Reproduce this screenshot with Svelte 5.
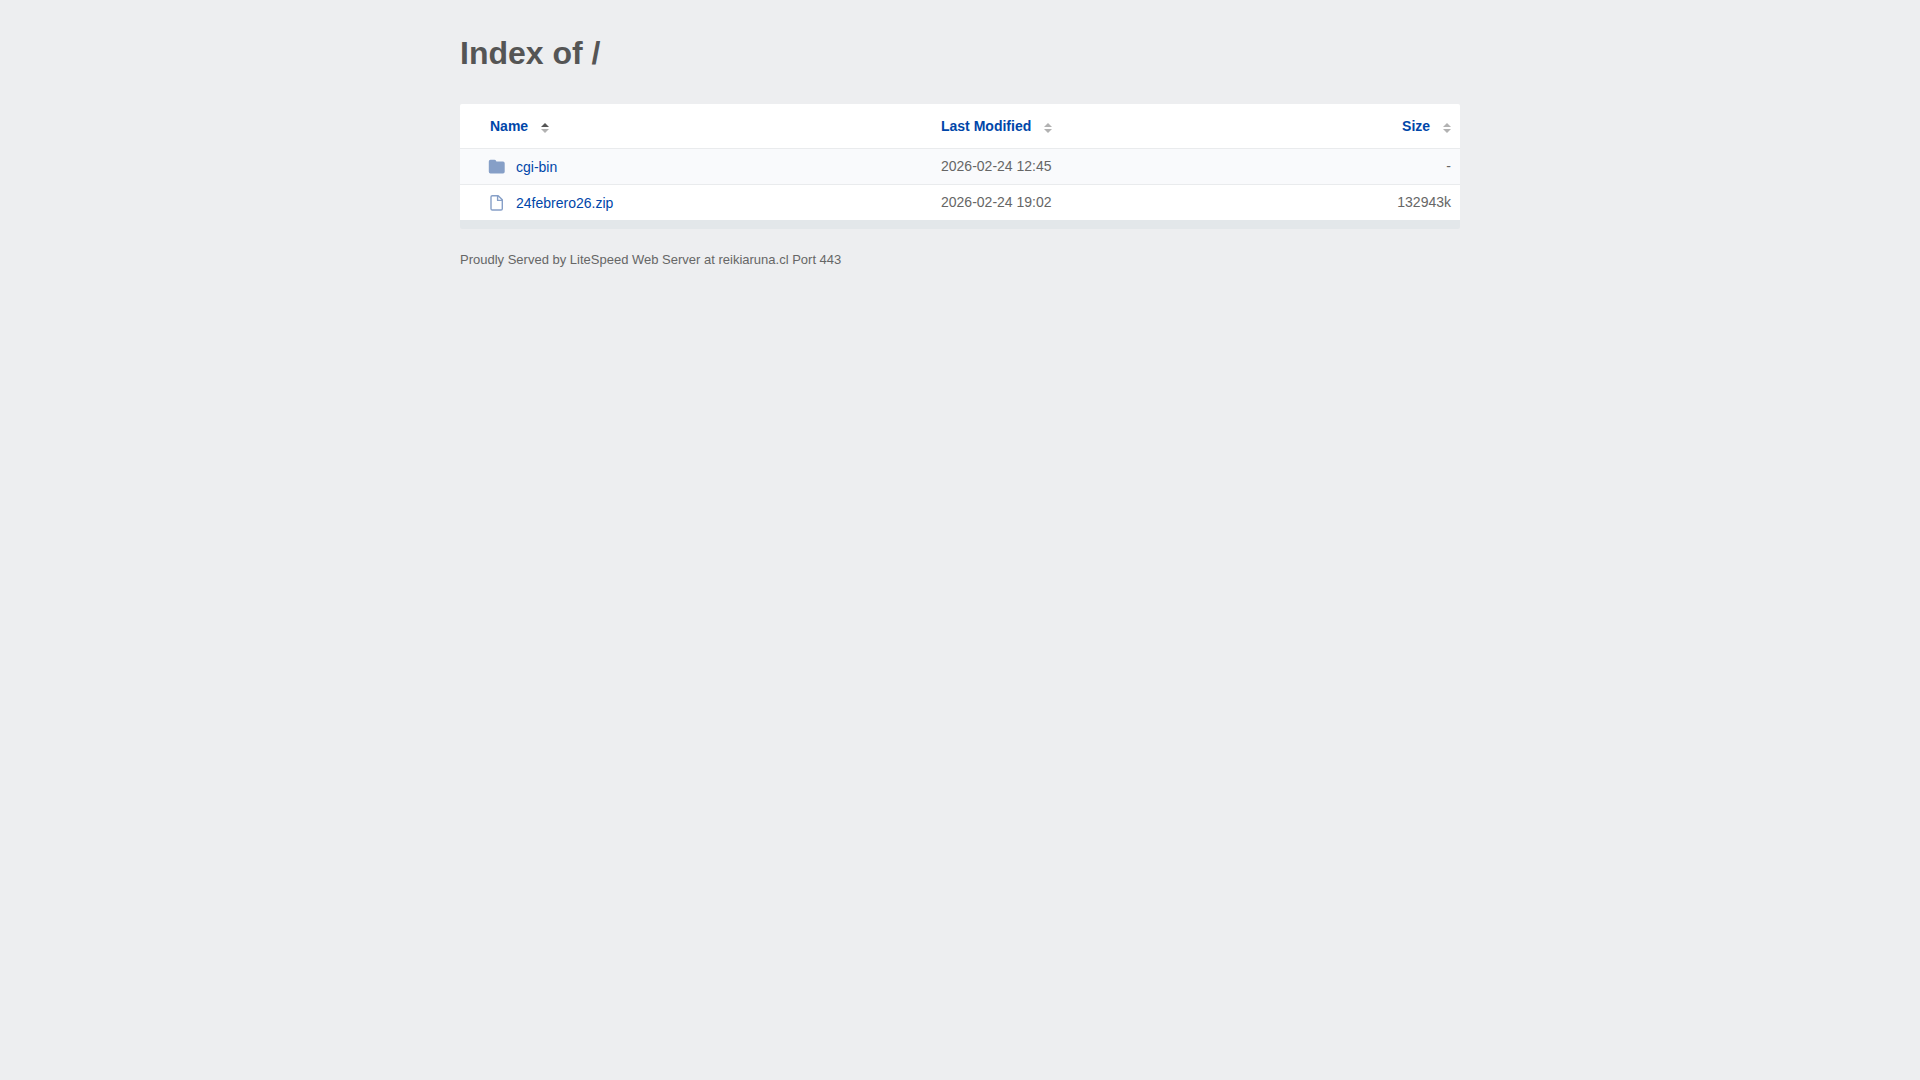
<script lang="ts">
	type Entry = {
		name: string;
		href: string;
		kind: 'folder' | 'file';
		modified: string;
		size: string;
		bytes: number;
	};

	type Key = 'name' | 'modified' | 'size';

	const host = 'reikiaruna.cl';
	const port = 443;

	const entries: Entry[] = [
		{ name: 'cgi-bin', href: '/cgi-bin/', kind: 'folder', modified: '2026-02-24 12:45', size: '-', bytes: -1 },
		{ name: '24febrero26.zip', href: '/24febrero26.zip', kind: 'file', modified: '2026-02-24 19:02', size: '132943k', bytes: 132943 }
	];

	const columns: { key: Key; label: string }[] = [
		{ key: 'name', label: 'Name' },
		{ key: 'modified', label: 'Last Modified' },
		{ key: 'size', label: 'Size' }
	];

	let sortKey = $state<Key>('name');
	let ascending = $state(true);

	function compare(a: Entry, b: Entry) {
		// folders stay on top
		if (a.kind !== b.kind) return a.kind === 'folder' ? -1 : 1;
		const diff = sortKey === 'size' ? a.bytes - b.bytes : a[sortKey].localeCompare(b[sortKey]);
		return ascending ? diff : -diff;
	}

	let rows = $derived([...entries].sort(compare));

	function sortBy(event: MouseEvent, key: Key) {
		event.preventDefault();
		ascending = sortKey === key ? !ascending : true;
		sortKey = key;
	}
</script>

<svelte:head>
	<title>Index of /</title>
</svelte:head>

<main>
	<h1>Index of /</h1>

	<table>
		<thead>
			<tr>
				{#each columns as col}
					<th class={col.key}>
						<a href="#{col.key}" onclick={(e) => sortBy(e, col.key)}>{col.label}</a>
						<svg class="sort" viewBox="0 0 8 10" aria-hidden="true">
							<path class:active={sortKey === col.key && ascending} d="M4 0 8 4H0z" />
							<path class:active={sortKey === col.key && !ascending} d="M0 6h8L4 10z" />
						</svg>
					</th>
				{/each}
			</tr>
		</thead>
		<tbody>
			{#each rows as row}
				<tr>
					<td class="name">
						<a class="entry" href={row.href}>
							{#if row.kind === 'folder'}
								<svg class="icon" viewBox="0 0 18 18" aria-hidden="true">
									<path
										fill="currentColor"
										d="M2.500 1.700h4q1 0 1.400.8l.5 1H15q1.700 0 1.700 1.700v8.600q0 1.700-1.700 1.700H2.500q-1.700 0-1.700-1.700V3.400q0-1.700 1.700-1.700z"
									/>
								</svg>
							{:else}
								<svg class="icon" viewBox="0 0 18 18" aria-hidden="true">
									<path
										fill="none"
										stroke="currentColor"
										stroke-width="1.400"
										stroke-linejoin="round"
										d="M4.300 1.700h5.900L14.300 5.800v8.900q0 1.300-1.300 1.300H4.300Q3 16 3 14.700V3q0-1.300 1.300-1.300zM9.600 2v4.400H14"
									/>
								</svg>
							{/if}
							{row.name}
						</a>
					</td>
					<td class="modified">{row.modified}</td>
					<td class="size">{row.size}</td>
				</tr>
			{/each}
		</tbody>
	</table>

	<footer>Proudly Served by LiteSpeed Web Server at {host} Port {port}</footer>
</main>

<style>
	:global(body) {
		background: #edeef0;
	}

	main {
		max-width: 1000px;
		margin: 0 auto;
		padding: 32px 16px;
		color: #666;
		font-family: Arial, 'Liberation Sans', sans-serif;
		font-size: 14px;
		line-height: 20px;
	}

	h1 {
		margin: 0 0 30px;
		color: #555;
		font-size: 32px;
		line-height: 42px;
	}

	table {
		width: 100%;
		border-collapse: separate;
		border-spacing: 0;
		table-layout: fixed;
		background: #fff;
		border-bottom: 9px solid #e3e7ea;
		border-radius: 2px;
	}

	th {
		height: 44px;
		padding: 0 9px;
		text-align: left;
		white-space: nowrap;
	}

	td {
		height: 33px;
		padding: 0 9px 2px;
		border-top: 1px solid #e9ebed;
	}

	th.name,
	td.name {
		width: 47%;
		padding: 0 0 0 30px;
		box-sizing: border-box;
	}

	td.name {
		padding-left: 28px;
	}

	th.modified,
	td.modified {
		width: 30%;
		padding-left: 11px;
	}

	.size {
		text-align: right;
	}

	tbody tr:nth-child(odd) {
		background: #f9fafc;
	}

	a {
		color: #0046a9;
		text-decoration: none;
	}

	a:hover {
		text-decoration: underline;
	}

	.sort {
		width: 8px;
		height: 10px;
		margin-left: 9px;
		vertical-align: -2px;
		fill: #b2b2b2;
	}

	.sort .active {
		fill: #555;
	}

	.entry {
		display: inline-flex;
		align-items: center;
		gap: 10px;
		vertical-align: middle;
	}

	.icon {
		width: 18px;
		height: 18px;
		color: #869fc7;
	}

	footer {
		margin-top: 21px;
		font-size: 13px;
	}
</style>
